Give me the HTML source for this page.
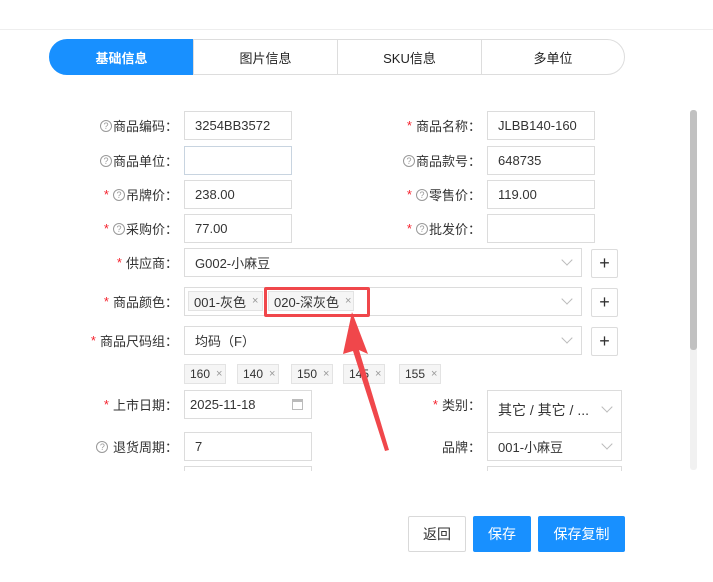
<!DOCTYPE html>
<html><head><meta charset="utf-8"><style>
*{box-sizing:border-box;margin:0;padding:0}
body{width:713px;height:582px;background:#fff;font-family:"Liberation Sans","Noto Sans CJK SC",sans-serif;font-size:13px;color:#333;position:relative;overflow:hidden}
.a{position:absolute}
.tab{position:absolute;top:39px;height:36px;border:1px solid #ddd;display:flex;align-items:center;justify-content:center;font-size:13px;color:#222;background:#fff}
.in{position:absolute;border:1px solid #dcdcdc;height:29px;padding-left:10px;display:flex;align-items:center;font-size:13px;color:#333;background:#fff}
.lb{position:absolute;height:29px;display:flex;align-items:center;justify-content:flex-end;font-size:13px;color:#333;white-space:nowrap}
.r{color:#f5222d;margin-right:4px}
.q{display:inline-block;width:12px;height:12px;border:1px solid #999;border-radius:50%;font-size:9px;line-height:10px;text-align:center;color:#999;margin-right:1px}
.plus{position:absolute;width:27px;height:29px;border:1px solid #dcdcdc;border-radius:2px;display:flex;align-items:center;justify-content:center;font-size:18px;color:#333}
.chev{position:absolute;right:10px;top:7px;width:8px;height:8px;border-right:1px solid #bbb;border-bottom:1px solid #bbb;transform:rotate(45deg)}
.tag{position:absolute;height:20px;border:1px solid #e3e3e3;background:#f5f5f5;font-size:12px;display:flex;align-items:center;padding-left:5px;color:#333}
.tag i{font-style:normal;color:#999;margin-left:6px;font-size:11px}
.btn{position:absolute;top:516px;height:36px;display:flex;align-items:center;justify-content:center;font-size:14px;border-radius:2px}
</style></head><body>
<div class="a" style="left:0;top:29px;width:713px;height:1px;background:#eee"></div>
<div class="tab" style="left:49px;width:145px;background:#1890ff;border-color:#1890ff;color:#fff;border-radius:18px 0 0 18px;font-weight:bold">基础信息</div>
<div class="tab" style="left:193px;width:145px">图片信息</div>
<div class="tab" style="left:337px;width:145px">SKU信息</div>
<div class="tab" style="left:481px;width:144px;border-radius:0 18px 18px 0">多单位</div>

<div class="lb" style="right:535px;top:111px"><span class="q">?</span>商品编码：</div>
<div class="in" style="left:184px;top:111px;width:108px">3254BB3572</div>
<div class="lb" style="right:232px;top:111px"><span class="r">*</span>商品名称：</div>
<div class="in" style="left:487px;top:111px;width:108px">JLBB140-160</div>

<div class="lb" style="right:535px;top:146px"><span class="q">?</span>商品单位：</div>
<div class="in" style="left:184px;top:146px;width:108px;border-color:#c8d4e0"></div>
<div class="lb" style="right:232px;top:146px"><span class="q">?</span>商品款号：</div>
<div class="in" style="left:487px;top:146px;width:108px">648735</div>

<div class="lb" style="right:535px;top:180px"><span class="r">*</span><span class="q">?</span>吊牌价：</div>
<div class="in" style="left:184px;top:180px;width:108px">238.00</div>
<div class="lb" style="right:232px;top:180px"><span class="r">*</span><span class="q">?</span>零售价：</div>
<div class="in" style="left:487px;top:180px;width:108px">119.00</div>

<div class="lb" style="right:535px;top:214px"><span class="r">*</span><span class="q">?</span>采购价：</div>
<div class="in" style="left:184px;top:214px;width:108px">77.00</div>
<div class="lb" style="right:232px;top:214px"><span class="r">*</span><span class="q">?</span>批发价：</div>
<div class="in" style="left:487px;top:214px;width:108px"></div>

<div class="lb" style="right:535px;top:248px"><span class="r">*</span>供应商：</div>
<div class="in" style="left:184px;top:248px;width:398px">G002-小麻豆<span class="chev"></span></div>
<div class="plus" style="left:591px;top:249px">+</div>

<div class="lb" style="right:535px;top:287px"><span class="r">*</span>商品颜色：</div>
<div class="in" style="left:184px;top:287px;width:398px;padding-left:3px"><span class="chev"></span></div>
<div class="tag" style="left:188px;top:291px;width:75px;font-size:13px">001-灰色<i>×</i></div>
<div class="tag" style="left:268px;top:291px;width:86px;font-size:13px">020-深灰色<i>×</i></div>
<div class="plus" style="left:591px;top:288px">+</div>

<div class="lb" style="right:535px;top:326px"><span class="r">*</span>商品尺码组：</div>
<div class="in" style="left:184px;top:326px;width:398px">均码（F）<span class="chev"></span></div>
<div class="plus" style="left:591px;top:327px">+</div>

<div class="tag" style="left:184px;top:364px;width:42px">160<i>×</i></div>
<div class="tag" style="left:237px;top:364px;width:42px">140<i>×</i></div>
<div class="tag" style="left:291px;top:364px;width:42px">150<i>×</i></div>
<div class="tag" style="left:343px;top:364px;width:42px">145<i>×</i></div>
<div class="tag" style="left:399px;top:364px;width:42px">155<i>×</i></div>

<div class="lb" style="right:535px;top:390px"><span class="r">*</span>上市日期：</div>
<div class="in" style="left:184px;top:390px;width:128px;padding-left:5px">2025-11-18<span style="position:absolute;right:8px;top:8px;width:11px;height:11px;border:1px solid #bbb;border-top-width:3px"></span></div>
<div class="lb" style="right:232px;top:390px"><span class="r">*</span>类别：</div>
<div class="in" style="left:487px;top:390px;width:135px;height:47px;font-size:14px;align-items:flex-start;padding-top:9px">其它 / 其它 / ...<span class="chev" style="top:12px"></span></div>

<div class="lb" style="right:535px;top:432px"><span class="q">?</span>&nbsp;退货周期：</div>
<div class="in" style="left:184px;top:432px;width:128px">7</div>
<div class="lb" style="right:232px;top:432px">品牌：</div>
<div class="in" style="left:487px;top:432px;width:135px">001-小麻豆<span class="chev"></span></div>

<div class="a" style="left:184px;top:466px;width:128px;height:5px;border:1px solid #dcdcdc;border-bottom:none"></div>
<div class="a" style="left:487px;top:466px;width:135px;height:5px;border:1px solid #dcdcdc;border-bottom:none"></div>
<div class="a" style="left:0;top:471px;width:713px;height:111px;background:#fff"></div>

<div class="a" style="left:690px;top:110px;width:7px;height:360px;background:#f1f1f1;border-radius:3px"></div>
<div class="a" style="left:690px;top:110px;width:7px;height:240px;background:#c1c1c1;border-radius:3px"></div>

<div class="btn" style="left:408px;width:58px;border:1px solid #d9d9d9;color:#333">返回</div>
<div class="btn" style="left:473px;width:58px;background:#1890ff;color:#fff">保存</div>
<div class="btn" style="left:538px;width:87px;background:#1890ff;color:#fff">保存复制</div>

<div class="a" style="left:264px;top:287px;width:106px;height:30px;border:3px solid #f0474b;border-radius:2px"></div>
<svg class="a" style="left:0;top:0" width="713" height="582"><polygon points="352,312 368,354 359,350 389,450 385,451 353,351 343,354" fill="#f0474b"/></svg>
</body></html>
